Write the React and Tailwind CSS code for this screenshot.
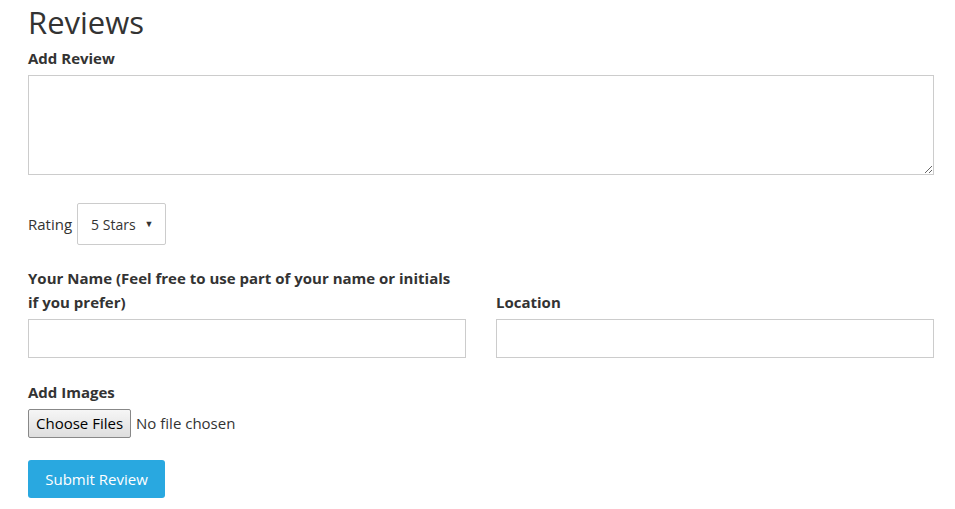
export default function App() {
  return (
    <div
      className="bg-white text-[#333] px-[28px] pt-[4px] w-[962px]"
      style={{ fontFamily: '"Open Sans", "Liberation Sans", sans-serif' }}
    >
      <h1 className="text-[31px] leading-[36px] font-medium">Reviews</h1>
      <label className="block text-[15px] leading-[22px] font-bold mt-[7px]">Add Review</label>
      <textarea className="block w-[906px] h-[100px] border border-[#ccc] mt-[6px] resize-y bg-white" />

      <div className="flex items-center gap-[5px] mt-[28px]">
        <span className="text-[15px]">Rating</span>
        <div className="flex items-center gap-[9px] h-[42px] w-[89px] border border-[#ccc] rounded-[2px] pl-[13px] text-[14px]">
          <span>5 Stars</span>
          <span className="text-[9px]">▼</span>
        </div>
      </div>

      <div className="grid grid-cols-2 gap-[30px] mt-[21px]">
        <div className="flex flex-col justify-end">
          <label className="block text-[15px] leading-[24px] font-bold pr-[8px]">
            Your Name (Feel free to use part of your name or initials if you prefer)
          </label>
          <input className="block h-[39px] border border-[#ccc] mt-[5px]" />
        </div>
        <div className="flex flex-col justify-end">
          <label className="block text-[15px] leading-[24px] font-bold">Location</label>
          <input className="block h-[39px] border border-[#ccc] mt-[5px]" />
        </div>
      </div>

      <label className="block text-[15px] leading-[24px] font-bold mt-[22px]">Add Images</label>
      <div className="flex items-center gap-[5px] mt-[5px] text-[15px]">
        <button className="h-[29px] px-[7px] border border-[#888] rounded-[2px] bg-gradient-to-b from-[#f6f6f6] to-[#dedede] text-black">
          Choose Files
        </button>
        <span>No file chosen</span>
      </div>

      <button className="block mt-[22px] h-[38px] w-[137px] rounded-[3px] bg-[#29a8e0] text-white text-[15px]">
        Submit Review
      </button>
    </div>
  );
}
